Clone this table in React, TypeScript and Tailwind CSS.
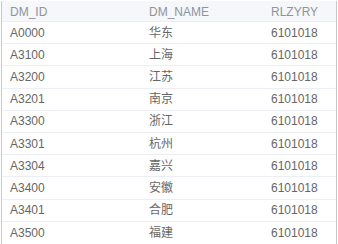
const rows = [
  ["A0000", "华东", "6101018"],
  ["A3100", "上海", "6101018"],
  ["A3200", "江苏", "6101018"],
  ["A3201", "南京", "6101018"],
  ["A3300", "浙江", "6101018"],
  ["A3301", "杭州", "6101018"],
  ["A3304", "嘉兴", "6101018"],
  ["A3400", "安徽", "6101018"],
  ["A3401", "合肥", "6101018"],
  ["A3500", "福建", "6101018"],
];

const App = () => {
  return (
    <div className="w-[338px] h-[244px] bg-white p-px">
      <div
        className="border border-[#c8c8c8] border-t-0 text-[12px] leading-none"
        style={{ fontFamily: '"Liberation Sans", "Noto Sans CJK SC", sans-serif' }}
      >
        <div className="grid grid-cols-[137px_122px_1fr] h-[21px] pt-[2px] bg-[#f5f7fa] text-[#909399] border-b border-[#ebeef5] items-center">
          <div className="pl-[8px]">DM_ID</div>
          <div className="pl-[10px]">DM_NAME</div>
          <div className="pl-[10px]">RLZYRY</div>
        </div>
        {rows.map((r, i) => (
          <div
            key={r[0]}
            className={
              "grid grid-cols-[137px_122px_1fr] h-[22.2px] items-center text-[#666] " +
              (i < rows.length - 1 ? "border-b border-[#ebeef5]" : "")
            }
          >
            <div className="pl-[8px]">{r[0]}</div>
            <div className="pl-[10px]">{r[1]}</div>
            <div className="pl-[10px]">{r[2]}</div>
          </div>
        ))}
      </div>
    </div>
  );
};

export default App;
